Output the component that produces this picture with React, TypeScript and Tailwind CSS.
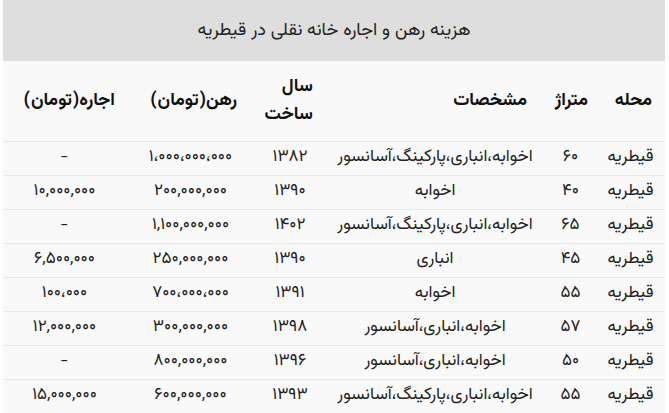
import React from "react";

const rows: string[][] = [
  ["قیطریه", "۶۰", "اخوابه،انباری،پارکینگ،آسانسور", "۱۳۸۲", "۱،۰۰۰،۰۰۰،۰۰۰", "-"],
  ["قیطریه", "۴۰", "اخوابه", "۱۳۹۰", "۲۰۰,۰۰۰,۰۰۰", "۱۰,۰۰۰,۰۰۰"],
  ["قیطریه", "۶۵", "اخوابه،انباری،پارکینگ،آسانسور", "۱۴۰۲", "۱,۱۰۰,۰۰۰,۰۰۰", "-"],
  ["قیطریه", "۴۵", "انباری", "۱۳۹۰", "۲۵۰,۰۰۰,۰۰۰", "۶,۵۰۰,۰۰۰"],
  ["قیطریه", "۵۵", "اخوابه", "۱۳۹۱", "۷۰۰،۰۰۰،۰۰۰", "۱۰۰،۰۰۰"],
  ["قیطریه", "۵۷", "اخوابه،انباری،آسانسور", "۱۳۹۸", "۳۰۰,۰۰۰,۰۰۰", "۱۲,۰۰۰,۰۰۰"],
  ["قیطریه", "۵۰", "اخوابه،انباری،آسانسور", "۱۳۹۶", "۸۰۰,۰۰۰,۰۰۰", "-"],
  ["قیطریه", "۵۵", "اخوابه،انباری،پارکینگ،آسانسور", "۱۳۹۳", "۶۰۰,۰۰۰,۰۰۰", "۱۵,۰۰۰,۰۰۰"],
];

const colW = ["w-[69px]", "w-[51px]", "w-[220px]", "w-[70px]", "w-[129px]", "w-[123px]"];
const headPad = ["pr-[13px]", "pr-[8px]", "pr-[18px]", "pr-[12px]", "pr-[18px]", "pr-[11px]"];
const cellExtra = ["", "", "", "tracking-[2px]", "tracking-[0.6px]", "tracking-[0.6px]"];

function Paren({ word }: { word: string }) {
  return (
    <>
      {word}
      <span className="ml-[1px]">(</span>
      تومان
      <span className="mr-[1px]">)</span>
    </>
  );
}

export default function App() {
  const heads: React.ReactNode[] = [
    "محله",
    "متراژ",
    "مشخصات",
    <>
      سال
      <br />
      ساخت
    </>,
    <Paren word="رهن" />,
    <Paren word="اجاره" />,
  ];
  return (
    <div className="bg-white w-[669px] h-[413px] overflow-hidden pl-[3px]">
      <div
        dir="rtl"
        className="w-[662px] text-[#222]"
        style={{ fontFamily: '"Vazirmatn", "Noto Sans Arabic", "DejaVu Sans", sans-serif' }}
      >
        <div className="h-[61px] bg-[#dedede] flex items-center justify-center text-[18px] text-[#222] pt-[2px]">
          هزینه رهن و اجاره خانه نقلی در قیطریه
        </div>
        <table className="table-fixed border-collapse bg-[#f9f9f9] w-[662px]">
          <colgroup>
            {colW.map((w, i) => (
              <col key={i} className={w} />
            ))}
          </colgroup>
          <thead>
            <tr className="h-[80px] border-b border-[#e8e8e8]">
              {heads.map((h, i) => (
                <th
                  key={i}
                  className={`p-0 ${headPad[i]} text-right font-bold text-[18px] leading-[28px] align-middle whitespace-nowrap text-[#111]`}
                >
                  {h}
                </th>
              ))}
            </tr>
          </thead>
          <tbody>
            {rows.map((r, ri) => (
              <tr key={ri} className="h-[34px] border-b border-[#e8e8e8]">
                {r.map((c, ci) => (
                  <td
                    key={ci}
                    className={`p-0 text-center align-middle whitespace-nowrap text-[17px] ${cellExtra[ci]}`}
                  >
                    {c}
                  </td>
                ))}
              </tr>
            ))}
          </tbody>
        </table>
      </div>
    </div>
  );
}
